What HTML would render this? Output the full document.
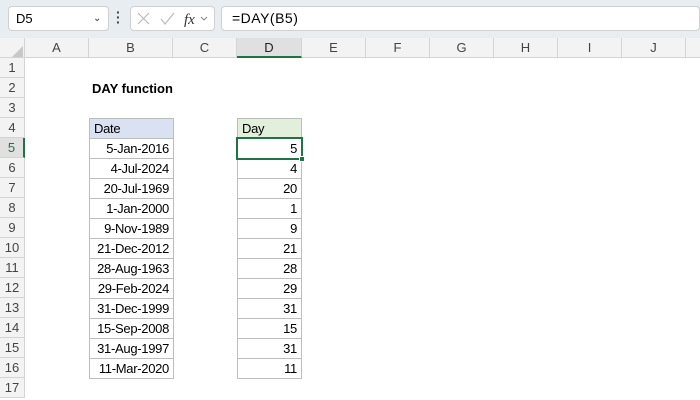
<!DOCTYPE html>
<html><head><style>
*{margin:0;padding:0;box-sizing:border-box}
body{width:700px;height:400px;overflow:hidden;background:#fff;font-family:"Liberation Sans",Calibri,sans-serif;font-size:13px;color:#000;position:relative}
.a{position:absolute;white-space:nowrap}
.ch{position:absolute;top:38px;height:20px;border-right:1px solid #d4d4d4;border-bottom:1px solid #d4d4d4;background:#f3f3f3;text-align:center;line-height:20px;color:#444;font-size:13px}
.rh{position:absolute;left:0;width:25px;height:20px;border-bottom:1px solid #d4d4d4;border-right:1px solid #d4d4d4;background:#f3f3f3;text-align:center;line-height:20px;color:#444;font-size:13px}
.c{position:absolute;height:21px;border:1px solid #bdbdbd;line-height:20px;padding:0 4px;font-size:13px;white-space:nowrap;overflow:hidden;letter-spacing:-0.3px}
</style></head><body>
<div class="a" style="left:0;top:0;width:700px;height:38px;background:#e8edf1"></div>
<div class="a" style="left:8px;top:6px;width:101px;height:25px;background:#fff;border:1px solid #d0d0d0;border-radius:4px;line-height:23px;padding-left:7px;font-size:13px">D5<span class="a" style="left:84px;top:0;font-size:10px;color:#333">&#8964;</span></div>
<div class="a" style="left:116px;top:10px;width:3px;height:16px;color:#444;font-size:14px;line-height:5px;font-weight:bold">·<br>·<br>·</div>
<div class="a" style="left:130px;top:6px;width:85px;height:25px;background:#fff;border:1px solid #d0d0d0;border-radius:4px"></div>
<svg class="a" style="left:134px;top:11px" width="80" height="16"><path d="M4 2l11 11M15 2L4 13" stroke="#bbb" stroke-width="1.2" fill="none"/><path d="M27 8l4 5 9-11" stroke="#bbb" stroke-width="1.2" fill="none"/><text x="50" y="13" font-family="Liberation Serif" font-style="italic" font-size="15" fill="#333">fx</text><path d="M67 6l3 3 3-3" stroke="#888" fill="none"/></svg>
<div class="a" style="left:221px;top:6px;width:479px;height:25px;background:#fff;border:1px solid #d0d0d0;border-radius:4px;line-height:23px;padding-left:10px;font-size:14px;letter-spacing:0.5px">=DAY(B5)</div>
<div class="ch" style="left:0;width:25px"></div>
<svg class="a" style="left:12px;top:46px" width="11" height="11"><path d="M11 0V11H0Z" fill="#c8c8c8"/></svg>
<div class="ch" style="left:25px;width:64px">A</div>
<div class="ch" style="left:89px;width:84px">B</div>
<div class="ch" style="left:173px;width:64px">C</div>
<div class="ch" style="left:237px;width:65px;background:#e0e0e0;border-bottom:2px solid #217346;color:#222">D</div>
<div class="ch" style="left:302px;width:64px">E</div>
<div class="ch" style="left:366px;width:64px">F</div>
<div class="ch" style="left:430px;width:64px">G</div>
<div class="ch" style="left:494px;width:64px">H</div>
<div class="ch" style="left:558px;width:64px">I</div>
<div class="ch" style="left:622px;width:64px">J</div>
<div class="ch" style="left:686px;width:20px"></div>
<div class="rh" style="top:58px">1</div><div class="rh" style="top:78px">2</div><div class="rh" style="top:98px">3</div><div class="rh" style="top:118px">4</div>
<div class="rh" style="top:138px;background:#e0e0e0;border-right:2px solid #217346;color:#217346">5</div>
<div class="rh" style="top:158px">6</div><div class="rh" style="top:178px">7</div><div class="rh" style="top:198px">8</div><div class="rh" style="top:218px">9</div><div class="rh" style="top:238px">10</div><div class="rh" style="top:258px">11</div><div class="rh" style="top:278px">12</div><div class="rh" style="top:298px">13</div><div class="rh" style="top:318px">14</div><div class="rh" style="top:338px">15</div><div class="rh" style="top:358px">16</div><div class="rh" style="top:378px">17</div>
<div class="a" style="left:92px;top:80px;font-weight:bold;line-height:18px">DAY function</div>
<div class="c" style="left:89px;top:118px;width:85px;background:#d9e1f2">Date</div>
<div class="c" style="left:237px;top:118px;width:65px;background:#e2efda">Day</div>
<div id="rows"></div>
<script>
var d=["5-Jan-2016","4-Jul-2024","20-Jul-1969","1-Jan-2000","9-Nov-1989","21-Dec-2012","28-Aug-1963","29-Feb-2024","31-Dec-1999","15-Sep-2008","31-Aug-1997","11-Mar-2020"];
var h="";d.forEach(function(s,i){var t=138+i*20;var day=s.split("-")[0];
h+='<div class="c" style="left:89px;top:'+t+'px;width:85px;text-align:right">'+s+'</div>';
h+='<div class="c" style="left:237px;top:'+t+'px;width:65px;text-align:right">'+day+'</div>';});
document.getElementById("rows").innerHTML=h;
</script>
<div class="a" style="left:236px;top:137px;width:67px;height:23px;border:2px solid #217346"></div>
<div class="a" style="left:299px;top:156px;width:6px;height:6px;background:#217346;border:1px solid #fff"></div>
</body></html>
